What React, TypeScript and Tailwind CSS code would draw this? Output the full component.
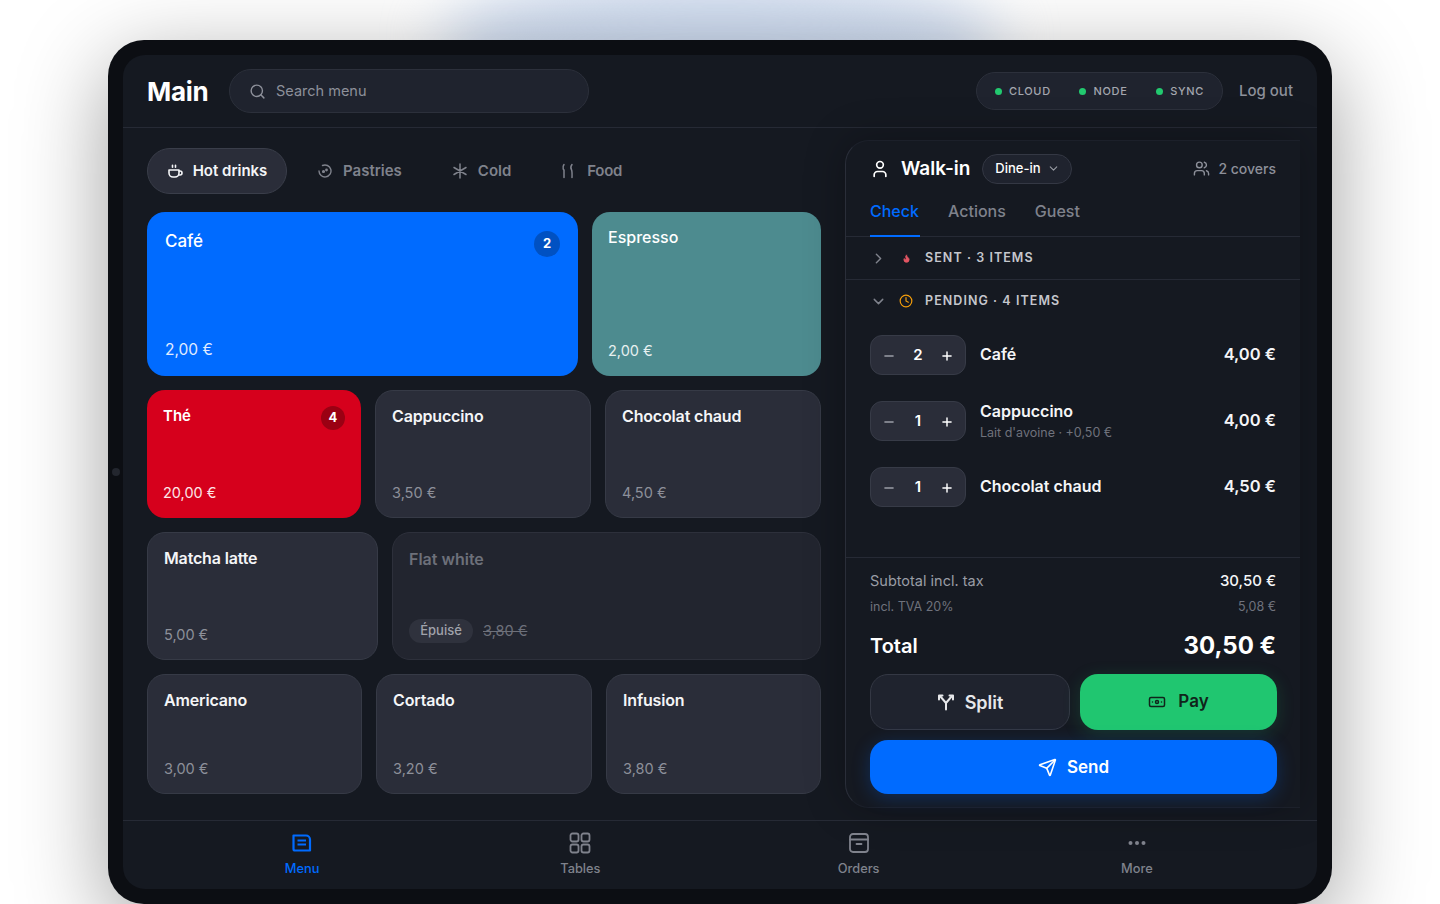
import React from "react";
import {
  Banknote,
  ChevronDown,
  ChevronRight,
  Clock,
  Flame,
  Minus,
  Plus,
  Search,
  Send,
  User,
  Users,
} from "lucide-react";

interface Tile {
  name: string;
  price: string;
  width: string;
}

const lastRow: Tile[] = [
  { name: "Americano", price: "3,00 €", width: "w-[215px]" },
  { name: "Cortado", price: "3,20 €", width: "w-[216px]" },
  { name: "Infusion", price: "3,80 €", width: "w-[215px]" },
];

const PlainTile: React.FC<{ tile: Tile }> = ({ tile }) => (
  <div
    className={`${tile.width} flex flex-col justify-between rounded-[18px] border border-[#363a46] bg-[#2a2d39] px-4 pt-[15px] pb-[14.5px]`}
  >
    <div className="text-[16px] font-semibold leading-5 tracking-[-0.01em] text-[#f4f5f7]">{tile.name}</div>
    <div className="text-[14.5px] leading-5 text-[#8d909a]">{tile.price}</div>
  </div>
);

const OrderLine: React.FC<{ qty: string; name: string; note?: string; price: string }> = ({
  qty,
  name,
  note,
  price,
}) => (
  <div className="flex h-10 items-center">
    <div className="flex h-10 w-24 items-center justify-between rounded-xl border border-[#373b47] bg-[#2a2d39] px-[11px] text-white">
      <Minus size={14} className="mt-[2px] text-[#9a9da6]" strokeWidth={2.5} />
      <span className="text-[15px] font-semibold">{qty}</span>
      <Plus size={14} className="mt-[2px]" strokeWidth={2.5} />
    </div>
    <div className={`ml-[14px] flex-1 ${note ? "" : "pb-[2px]"}`}>
      <div className="text-[16px] font-semibold leading-5 text-[#f4f5f7]">{name}</div>
      {note && <div className="mt-[4px] text-[12.5px] leading-4 text-[#6f727c]">{note}</div>}
    </div>
    <div className="pb-[2px] text-[16.5px] font-semibold text-[#f4f5f7]">{price}</div>
  </div>
);

const CupIcon = () => (
  <svg width="16" height="16" viewBox="0 0 16 16" fill="none" stroke="currentColor" strokeWidth="1.6" strokeLinecap="round" strokeLinejoin="round">
    <path d="M2 7h10v3a4 4 0 0 1-4 4H6a4 4 0 0 1-4-4z" />
    <path d="M12 8h1a2 2 0 0 1 0 4h-1" />
    <path d="M5.500 2.200v2M8.500 2.200v2" />
  </svg>
);

const PastryIcon = () => (
  <svg width="14" height="14" viewBox="0 0 14 14" fill="none" stroke="currentColor" strokeWidth="1.4" strokeLinecap="round">
    <path d="M4.500 1.500A6 6 0 1 1 1 7" />
    <circle cx="5.500" cy="7.500" r="0.900" fill="currentColor" />
    <circle cx="8.500" cy="6" r="0.700" fill="currentColor" />
  </svg>
);

const ColdIcon = () => (
  <svg width="16" height="16" viewBox="0 0 16 16" fill="none" stroke="currentColor" strokeWidth="1.5" strokeLinecap="round">
    <path d="M8 1v14M2 4.500l12 7M14 4.500l-12 7" />
  </svg>
);

const FoodIcon = () => (
  <svg width="16" height="16" viewBox="0 0 16 16" fill="none" stroke="currentColor" strokeWidth="1.5" strokeLinecap="round">
    <path d="M4 1.500c-.8 1-1.100 3-.8 4.300.1.600.4 1 .8 1.200V14.500" />
    <path d="M12 1.500c-1.500 2-1.500 3.500-.6 5 .7 1.100.8 3 .6 8" />
  </svg>
);

const SplitIcon = () => (
  <svg width="18" height="18" viewBox="0 0 18 18" fill="none" stroke="currentColor" strokeWidth="2" strokeLinecap="round" strokeLinejoin="round">
    <path d="M9 16.500v-6.500L3 3M9 10l6-7" />
    <path d="M2 6.500V2.500h3.500M16 6.500V2.500h-3.500" />
  </svg>
);

const MenuIcon = () => (
  <svg width="22" height="22" viewBox="0 0 22 22" fill="none" stroke="currentColor" strokeWidth="2.2" strokeLinejoin="round">
    <path d="M2.500 3.500h12.500c2.200 0 4 1.800 4 4v11H4a1.500 1.500 0 0 1-1.500-1.500z" />
    <path d="M6.500 8.500h8.500M6.500 12.500h8.500" strokeWidth="1.900" />
  </svg>
);

const TablesIcon = () => (
  <svg width="22" height="22" viewBox="0 0 22 22" fill="none" stroke="currentColor" strokeWidth="1.800">
    <rect x="1.500" y="1.500" width="8" height="8" rx="2" />
    <rect x="12.500" y="1.500" width="8" height="8" rx="2" />
    <rect x="1.500" y="12.500" width="8" height="8" rx="2" />
    <rect x="12.500" y="12.500" width="8" height="8" rx="2" />
  </svg>
);

const OrdersIcon = () => (
  <svg width="22" height="22" viewBox="0 0 22 22" fill="none" stroke="currentColor" strokeWidth="1.800" strokeLinecap="round">
    <rect x="2" y="2" width="18" height="18" rx="3" />
    <path d="M2 7.500h18M8.500 12h5" />
  </svg>
);

const MoreIcon = () => (
  <svg width="22" height="22" viewBox="0 0 22 22" fill="currentColor">
    <circle cx="4.500" cy="11" r="2" />
    <circle cx="11" cy="11" r="2" />
    <circle cx="17.500" cy="11" r="2" />
  </svg>
);

export default function App() {
  return (
    <div className="relative h-[904px] w-[1440px] overflow-hidden bg-white pt-10 pl-[108px] font-['Inter',sans-serif]">
      <div className="absolute top-[-25px] left-[440px] h-[130px] w-[560px] rounded-[50%] bg-[#cfdcf0] blur-[28px]" />

      <div className="relative h-[864px] w-[1224px] rounded-[36px] bg-[#0c0e13] p-[15px] shadow-[0_24px_90px_rgba(0,0,0,0.38)]">
        <div className="absolute top-[428px] left-[4px] h-2 w-2 rounded-full bg-[#23262e]" />

        <div className="flex h-[834px] flex-col overflow-hidden rounded-[22px] bg-[#151921]">
          <header className="flex h-[73px] shrink-0 items-center border-b border-[#262a35] px-6">
            <h1 className="w-[61px] text-[26px] font-bold tracking-[-0.01em] whitespace-nowrap text-white">Main</h1>
            <div className="ml-[21px] flex h-11 w-[360px] items-center gap-[10px] rounded-[22px] border border-[#2c303b] bg-[#1f232e] pl-[19px] text-[#8d909a]">
              <Search size={17} />
              <span className="text-[14.5px]">Search menu</span>
            </div>
            <div className="ml-auto flex h-[38px] w-[247px] items-center justify-between rounded-[19px] border border-[#2c303b] bg-[#1f232e] px-[18px]">
              {["CLOUD", "NODE", "SYNC"].map((label) => (
                <span key={label} className="flex items-center gap-[7px] text-[11px] font-medium tracking-[0.06em] text-[#a4a7af]">
                  <span className="h-[7px] w-[7px] rounded-full bg-[#22c96f]" />
                  {label}
                </span>
              ))}
            </div>
            <span className="ml-4 text-[15px] font-medium text-[#8d909a]">Log out</span>
          </header>

          <div className="flex min-h-0 flex-1">
            <main className="w-[722px] shrink-0 px-6 pt-5">
              <nav className="flex h-[46px] items-center text-[15px] font-semibold text-[#7f828c]">
                <div className="flex h-[46px] w-[140px] items-center justify-center gap-[10px] rounded-[23px] border border-[#3a3e4a] bg-[#2a2d39] text-[#f4f5f7]">
                  <CupIcon />
                  Hot drinks
                </div>
                <div className="ml-[31px] flex items-center gap-[11px]">
                  <PastryIcon />
                  Pastries
                </div>
                <div className="ml-[50px] flex items-center gap-[10px]">
                  <ColdIcon />
                  Cold
                </div>
                <div className="ml-[49px] flex items-center gap-[11px]">
                  <FoodIcon />
                  <span className="tracking-[-0.02em]">Food</span>
                </div>
              </nav>

              <div className="mt-[18px] flex flex-col gap-[14px]">
                <div className="flex h-[164px] gap-[14px]">
                  <div className="flex w-[431px] flex-col justify-between rounded-[18px] bg-[#006bff] px-[18px] pt-[18px] pb-[16.5px] text-white">
                    <div className="flex items-start justify-between">
                      <span className="text-[17px] font-medium leading-[22px]">Café</span>
                      <span className="mt-[1px] flex h-[26px] w-[26px] items-center justify-center rounded-full bg-[#0051c2] text-[13px] font-bold">2</span>
                    </div>
                    <span className="text-[15.5px] leading-5 text-[#e1ecff]">2,00 €</span>
                  </div>
                  <div className="flex w-[229px] flex-col justify-between rounded-[18px] bg-[#4d8b8f] px-4 py-[15px] text-white">
                    <span className="text-[16px] font-medium leading-5">Espresso</span>
                    <span className="text-[14.5px] leading-5 text-[#e6f0f0]">2,00 €</span>
                  </div>
                </div>

                <div className="flex h-[128px] gap-[14px]">
                  <div className="flex w-[214px] flex-col justify-between rounded-[18px] bg-[#d6001c] px-4 py-[15px] text-white">
                    <div className="flex items-start justify-between">
                      <span className="pt-[1px] text-[15px] font-semibold leading-5">Thé</span>
                      <span className="mt-[1px] flex h-6 w-6 items-center justify-center rounded-full bg-[#9a0013] text-[13px] font-bold">4</span>
                    </div>
                    <span className="text-[14.5px] leading-5 text-[#fde6e8]">20,00 €</span>
                  </div>
                  <PlainTile tile={{ name: "Cappuccino", price: "3,50 €", width: "w-[216px]" }} />
                  <PlainTile tile={{ name: "Chocolat chaud", price: "4,50 €", width: "w-[216px]" }} />
                </div>

                <div className="flex h-[128px] gap-[14px]">
                  <PlainTile tile={{ name: "Matcha latte", price: "5,00 €", width: "w-[231px]" }} />
                  <div className="flex w-[429px] flex-col justify-between rounded-[18px] border border-[#2d303b] bg-[#22252f] px-4 py-4">
                    <div className="text-[16px] font-semibold leading-5 text-[#6d707a]">Flat white</div>
                    <div className="flex items-center gap-[10px]">
                      <span className="flex h-6 w-16 items-center justify-center rounded-xl bg-[#2f323d] text-[13px] font-medium text-[#a0a3ab]">Épuisé</span>
                      <span className="text-[14.5px] text-[#6d707a] line-through">3,80 €</span>
                    </div>
                  </div>
                </div>

                <div className="flex h-[120px] gap-[14px]">
                  {lastRow.map((tile) => (
                    <PlainTile key={tile.name} tile={tile} />
                  ))}
                </div>
              </div>
            </main>

            <aside className="mt-3 flex h-[668px] w-[455px] shrink-0 flex-col rounded-l-[24px] border-y border-l border-t-[#1c202a] border-b-[#1c202a] border-l-[#2a2e39] shadow-[0_0_40px_rgba(0,0,0,0.28)]">
              <div className="flex h-[55px] shrink-0 items-center px-6 text-white">
                <User size={20} />
                <span className="ml-[11px] pt-[2px] text-[19px] font-semibold">Walk-in</span>
                <span className="ml-3 flex h-[30px] w-[90px] items-center justify-center gap-[6px] rounded-[15px] border border-[#343844] bg-[#1f232e] text-[13px] font-medium">
                  Dine-in
                  <ChevronDown size={13} className="text-[#9a9da6]" />
                </span>
                <span className="ml-auto flex items-center gap-2 text-[14px] font-medium text-[#8d909a]">
                  <Users size={17} />
                  2 covers
                </span>
              </div>

              <div className="flex h-[41px] shrink-0 gap-[29px] border-b border-[#262a35] pl-6 text-[16px] font-medium text-[#7f828c]">
                <span className="-mr-[1px] h-[41px] w-[50px] border-b-2 border-[#006bff] pt-[3px] text-[#006bff]">Check</span>
                <span className="pt-[3px]">Actions</span>
                <span className="pt-[3px]">Guest</span>
              </div>

              <div className="flex h-[43px] shrink-0 items-center border-b border-[#262a35] pl-6 text-[12.5px] font-semibold tracking-[0.085em] text-[#c5c7cd]">
                <ChevronRight size={17} className="text-[#7f828c]" />
                <Flame size={9} className="ml-[15px] fill-[#e25563] text-[#e25563]" />
                <span className="ml-[14px]">SENT · 3 ITEMS</span>
              </div>
              <div className="flex h-[43px] shrink-0 items-center pb-[1px] pl-6 text-[12.5px] font-semibold tracking-[0.085em] text-[#c5c7cd]">
                <ChevronDown size={17} className="text-[#7f828c]" />
                <Clock size={14} className="ml-3 text-[#f59e0b]" />
                <span className="ml-3">PENDING · 4 ITEMS</span>
              </div>

              <div className="mt-[12px] flex flex-col gap-[26px] px-6">
                <OrderLine qty="2" name="Café" price="4,00 €" />
                <OrderLine qty="1" name="Cappuccino" note="Lait d'avoine · +0,50 €" price="4,00 €" />
                <OrderLine qty="1" name="Chocolat chaud" price="4,50 €" />
              </div>

              <div className="mt-[50px] flex flex-1 flex-col border-t border-[#262a35] pt-[13px] pr-[23px] pl-6">
                <div className="flex h-5 items-center justify-between pr-[1px] text-[14.5px] text-[#9a9da6]">
                  <span>Subtotal incl. tax</span>
                  <span className="text-[15px] font-medium text-[#f4f5f7]">30,50 €</span>
                </div>
                <div className="mt-[8px] flex h-4 items-center justify-between pr-[1px] text-[12.5px] text-[#6f727c]">
                  <span>incl. TVA 20%</span>
                  <span>5,08 €</span>
                </div>
                <div className="mt-[13px] flex h-9 items-center justify-between pr-[1px] text-white">
                  <span className="text-[20px] font-semibold">Total</span>
                  <span className="text-[24px] font-bold">30,50 €</span>
                </div>
                <div className="mt-[10px] flex h-14 gap-[10px] text-[17px] font-semibold">
                  <div className="flex w-[200px] items-center justify-center gap-[10px] rounded-[18px] border border-[#343844] bg-[#1f232e] text-[18px] text-[#e6e7ea]">
                    <SplitIcon />
                    Split
                  </div>
                  <div className="flex flex-1 items-center justify-center gap-3 rounded-[18px] bg-[#20c670] text-[#10241b] shadow-[0_4px_18px_rgba(32,198,112,0.18)]">
                    <Banknote size={18} />
                    Pay
                  </div>
                </div>
                <div className="mt-[10px] flex h-[54px] items-center justify-center gap-[10px] rounded-[18px] bg-[#006bff] pt-[1px] text-[17px] font-semibold text-white shadow-[0_4px_18px_rgba(0,107,255,0.25)]">
                  <Send size={19} />
                  Send
                </div>
              </div>
            </aside>
          </div>

          <footer className="grid h-[69px] shrink-0 grid-cols-4 border-t border-[#262a35] pr-[41px] pl-[40px] text-[12.8px] font-medium text-[#7f828c]">
            <div className="flex flex-col items-center justify-center gap-[5px] pt-[1px] text-[#006bff]">
              <MenuIcon />
              Menu
            </div>
            <div className="flex flex-col items-center justify-center gap-[5px] pt-[1px]">
              <TablesIcon />
              Tables
            </div>
            <div className="flex flex-col items-center justify-center gap-[5px] pt-[1px]">
              <OrdersIcon />
              Orders
            </div>
            <div className="flex flex-col items-center justify-center gap-[5px] pt-[1px]">
              <MoreIcon />
              More
            </div>
          </footer>
        </div>
      </div>
    </div>
  );
}
